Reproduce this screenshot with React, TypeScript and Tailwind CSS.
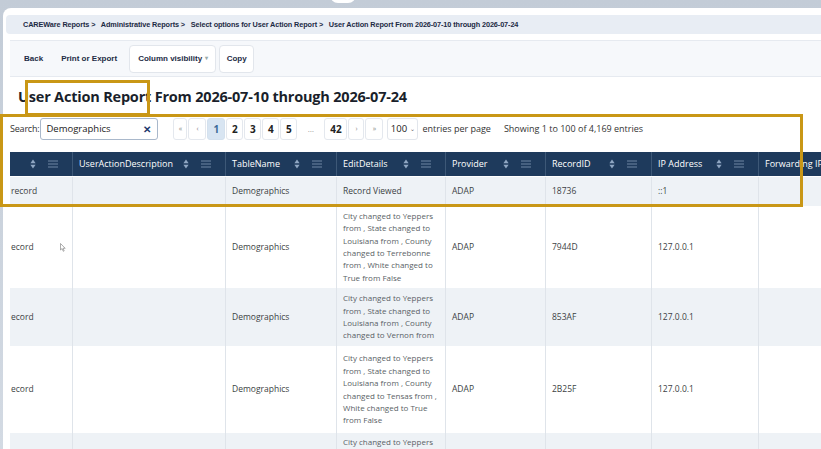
import type { ReactNode } from 'react'

type Row = {
  first: string
  table: string
  details: string[]
  provider: string
  recordId: string
  ip: string
  height: number
  shaded: boolean
}

const columns = [
  { label: '', width: 63 },
  { label: 'UserActionDescription', width: 153 },
  { label: 'TableName', width: 111 },
  { label: 'EditDetails', width: 109 },
  { label: 'Provider', width: 100 },
  { label: 'RecordID', width: 106 },
  { label: 'IP Address', width: 107 },
  { label: 'Forwarding IP Address', width: 130 },
]

const rows: Row[] = [
  {
    first: 'record',
    table: 'Demographics',
    details: ['Record Viewed'],
    provider: 'ADAP',
    recordId: '18736',
    ip: '::1',
    height: 29,
    shaded: true,
  },
  {
    first: 'ecord',
    table: 'Demographics',
    details: [
      'City changed to Yeppers',
      'from , State changed to',
      'Louisiana from , County',
      'changed to Terrebonne',
      'from , White changed to',
      'True from False',
    ],
    provider: 'ADAP',
    recordId: '7944D',
    ip: '127.0.0.1',
    height: 82,
    shaded: false,
  },
  {
    first: 'ecord',
    table: 'Demographics',
    details: ['City changed to Yeppers', 'from , State changed to', 'Louisiana from , County', 'changed to Vernon from'],
    provider: 'ADAP',
    recordId: '853AF',
    ip: '127.0.0.1',
    height: 58,
    shaded: true,
  },
  {
    first: 'ecord',
    table: 'Demographics',
    details: [
      'City changed to Yeppers',
      'from , State changed to',
      'Louisiana from , County',
      'changed to Tensas from ,',
      'White changed to True',
      'from False',
    ],
    provider: 'ADAP',
    recordId: '2B25F',
    ip: '127.0.0.1',
    height: 87,
    shaded: false,
  },
  {
    first: 'ecord',
    table: 'Demographics',
    details: [
      'City changed to Yeppers',
      'from , State changed to',
      'Louisiana from , County',
      'changed to Tangipahoa',
      'from , White changed to',
      'True from False',
    ],
    provider: 'ADAP',
    recordId: '3C11A',
    ip: '127.0.0.1',
    height: 82,
    shaded: true,
  },
]

const SortIcon = () => (
  <svg width="6" height="10" viewBox="0 0 6 10" aria-hidden="true">
    <path d="M3 0.5 L5.6 4.3 H0.4 Z" fill="#8fa6c2" />
    <path d="M3 9.5 L5.6 5.7 H0.4 Z" fill="#8fa6c2" />
  </svg>
)

const MenuIcon = () => (
  <svg width="10" height="8" viewBox="0 0 10 8" aria-hidden="true">
    <path d="M0 1 H10 M0 4 H10 M0 7 H10" stroke="#6f86a3" strokeWidth="1" />
  </svg>
)

const PageButton = ({ children, active, small, w }: { children: ReactNode; active?: boolean; small?: boolean; w: string }) => (
  <div
    className={`flex h-[22px] items-center justify-center rounded-[3px] border ${w} ${
      active ? 'border-[#d4e1ee] bg-[#d8e5f2] text-[#3b6a99]' : 'border-[#e4e8ee] bg-white text-[#222]'
    } ${small ? 'text-[7px] font-normal text-[#888]' : 'text-[10px] font-bold'}`}
  >
    {children}
  </div>
)

export default function App() {
  return (
    <div className="relative h-[449px] w-[821px] overflow-hidden bg-[linear-gradient(#c3ccd7,#d3dae3)] pl-[3px] pt-[8px] font-['Open_Sans',sans-serif]">
      <div className="absolute left-[330px] top-[-6px] h-[9px] w-[26px] rounded-b-[8px] bg-white" />

      <div className="h-full rounded-tl-[8px] bg-white pt-[7px]">
        <div className="ml-[3px] flex h-[19px] items-center rounded-l-[4px] bg-[#e8edf4] pl-[17px] pt-[2px] font-['Liberation_Sans',sans-serif] text-[7.3px] font-bold tracking-[-0.1px] text-[#1c2a44]">
          CAREWare Reports &gt;&nbsp;&nbsp; Administrative Reports &gt;&nbsp;&nbsp; Select options for User Action Report &gt;&nbsp;&nbsp; User
          Action Report From 2026-07-10 through 2026-07-24
        </div>

        <div className="ml-[7px] mt-[6px] flex h-[37px] items-center border-y border-[#e6eaf0] bg-[#f6f8fb] pl-[14px] font-['Liberation_Sans',sans-serif] text-[8px] font-bold text-[#1d2b45]">
          <span>Back</span>
          <span className="ml-[18px]">Print or Export</span>
          <div className="ml-[12px] flex h-[28px] w-[87px] items-center rounded-[4px] border border-[#e2e6ec] bg-white pl-[8px]">
            Column visibility <span className="ml-[3px] text-[6px] text-[#9aa]">▾</span>
          </div>
          <div className="ml-[3px] flex h-[28px] w-[35px] items-center justify-center rounded-[4px] border border-[#e2e6ec] bg-white">
            Copy
          </div>
        </div>

        <h1 className="ml-[15px] mt-[9px] text-[14.5px] font-bold leading-[22px] tracking-[-0.2px] text-[#1a1f2b]">
          User Action Report From 2026-07-10 through 2026-07-24
        </h1>

        <div className="mt-[10px] flex h-[22px] items-center pl-[7px] text-[9px] text-[#333]">
          <span className="tracking-[-0.2px]">Search:</span>
          <div className="ml-[1px] flex h-[22px] w-[118px] items-center justify-between rounded-[3px] border border-[#a9b8cb] bg-white pl-[5px] pr-[6px]">
            <span className="text-[9.5px] text-[#222]">Demographics</span>
            <span className="text-[10px] font-bold text-[#1f3a6e]">✕</span>
          </div>
          <div className="ml-[15px] flex items-center gap-[1px]">
            <PageButton small w="w-[14px]">«</PageButton>
            <PageButton small w="w-[18px]">‹</PageButton>
            <PageButton active w="w-[18px]">1</PageButton>
            <PageButton w="w-[17px]">2</PageButton>
            <PageButton w="w-[17px]">3</PageButton>
            <PageButton w="w-[17px]">4</PageButton>
            <PageButton w="w-[17px]">5</PageButton>
            <div className="flex h-[22px] w-[25px] items-center justify-center text-[8px] text-[#999]">…</div>
            <PageButton w="w-[23px]">42</PageButton>
            <PageButton small w="w-[16px]">›</PageButton>
            <PageButton small w="w-[18px]">»</PageButton>
          </div>
          <div className="ml-[4px] flex h-[22px] w-[31px] items-center justify-center gap-[3px] rounded-[3px] border border-[#e2e6ec] text-[9.5px] text-[#222]">
            100 <span className="text-[6px] text-[#666]">⌄</span>
          </div>
          <span className="ml-[4px]">entries per page</span>
          <span className="ml-[13px]">Showing 1 to 100 of 4,169 entries</span>
        </div>

        <div className="ml-[7px] mt-[12px] overflow-hidden">
          <div className="flex h-[24px] bg-[#1e3a5c] text-[9px] text-white">
            {columns.map((col, i) => (
              <div
                key={i}
                className="flex shrink-0 items-center border-r border-[#3d5877] pl-[6px]"
                style={{ width: col.width }}
              >
                <span className="flex-1 whitespace-nowrap">{col.label}</span>
                {i < 7 && (
                  <span className="flex items-center gap-[12px] pr-[14px]">
                    <SortIcon />
                    <MenuIcon />
                  </span>
                )}
              </div>
            ))}
          </div>
          <div className="h-[1px] bg-white" />
          {rows.map((row, r) => (
            <div
              key={r}
              className={`flex text-[8.5px] text-[#3c3f44] ${row.shaded ? 'bg-[#eef2f6]' : 'bg-white'}`}
              style={{ height: row.height }}
            >
              <div className="relative flex shrink-0 items-center border-r border-[#dfe4ea] pl-[1px]" style={{ width: 63 }}>
                {row.first}
                {r === 1 && (
                  <svg className="absolute left-[50px] top-[37px]" width="6" height="9" viewBox="0 0 6 9" aria-hidden="true">
                    <path d="M0.5 0.5 V7 L2 5.6 L3.3 8.3 L4.2 7.9 L3 5.3 H5.2 Z" fill="white" stroke="#777" strokeWidth="0.6" />
                  </svg>
                )}
              </div>
              <div className="shrink-0 border-r border-[#dfe4ea]" style={{ width: 153 }} />
              <div className="flex shrink-0 items-center border-r border-[#dfe4ea] pl-[6px]" style={{ width: 111 }}>
                {row.table}
              </div>
              <div
                className={`flex shrink-0 flex-col overflow-hidden border-r border-[#dfe4ea] pl-[6px] leading-[12.4px] ${
                  row.details.length > 1 ? 'text-[8px] text-[#5a5f66]' : ''
                } ${r === 4 ? 'justify-start pt-[3px]' : 'justify-center'}`}
                style={{ width: 109 }}
              >
                {row.details.map((line, k) => (
                  <span key={k} className="whitespace-nowrap">
                    {line}
                  </span>
                ))}
              </div>
              <div className="flex shrink-0 items-center border-r border-[#dfe4ea] pl-[6px]" style={{ width: 100 }}>
                {row.provider}
              </div>
              <div className="flex shrink-0 items-center border-r border-[#dfe4ea] pl-[6px]" style={{ width: 106 }}>
                {row.recordId}
              </div>
              <div className="flex shrink-0 items-center border-r border-[#dfe4ea] pl-[6px]" style={{ width: 107 }}>
                {row.ip}
              </div>
              <div className="shrink-0" style={{ width: 130 }} />
            </div>
          ))}
        </div>
      </div>

      <div className="pointer-events-none absolute left-[25px] top-[80px] h-[36px] w-[125px] border-[3px] border-[#c99716]" />
      <div className="pointer-events-none absolute left-[0px] top-[114px] h-[93px] w-[803px] border-[3px] border-[#c99716]" />
    </div>
  )
}
